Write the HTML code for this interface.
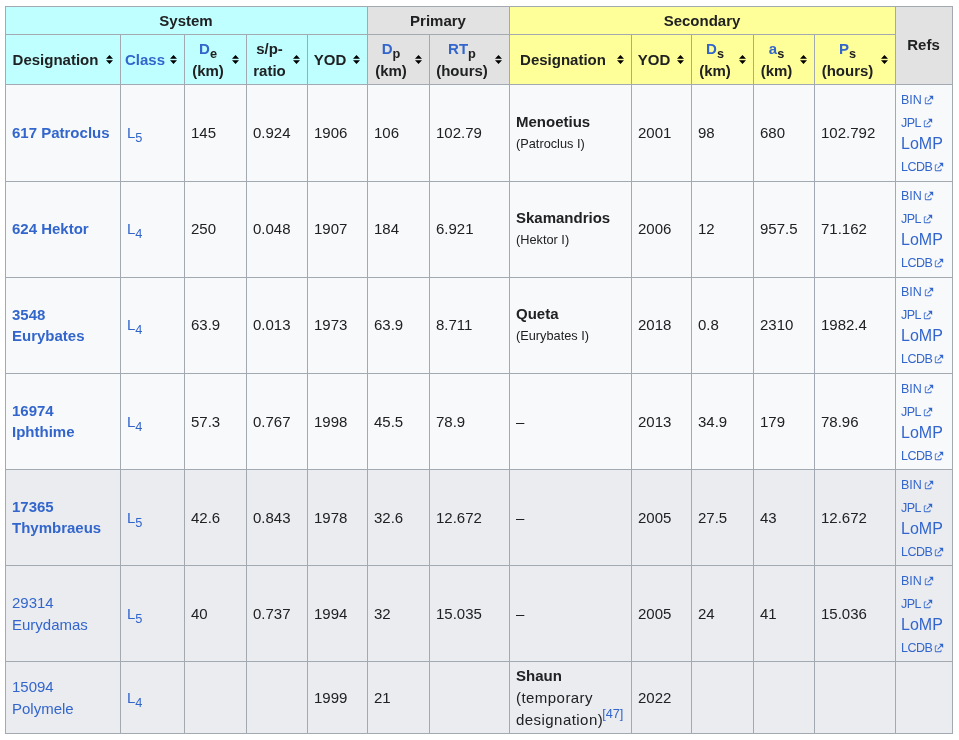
<!DOCTYPE html>
<html><head><meta charset="utf-8"><style>
html,body{margin:0;padding:0;background:#fff;width:959px;height:740px;overflow:hidden}
body{position:relative;font-family:"Liberation Sans",sans-serif;color:#202122;font-size:15px}
.frame{position:absolute;left:5px;top:6px;width:948px;height:728px;background:#a2a9b1}
.c{position:absolute}
.layer{position:absolute;left:0;top:0;width:959px;height:740px;will-change:transform}
.t{position:absolute;line-height:20px;white-space:nowrap;font-size:15px}
.t.sm{font-size:12.75px}
.t.l.sm{font-size:12.5px}
.b,b{font-weight:bold}
.l,.l b{color:#3366cc}
sub{font-size:85%;vertical-align:-4px;line-height:0;font-weight:inherit}
.b sub{color:#202122}
sup{font-size:85%;vertical-align:7px;line-height:0;letter-spacing:0;margin-left:-1px}
.ic{position:absolute;width:7px;height:9px;line-height:0}
.ls{letter-spacing:0.45px}
.ext{margin-left:2px;vertical-align:-1px}
</style></head><body>
<div class="frame"></div>
<div class="layer">
<div class="c" style="left:6px;top:7px;width:361px;height:27px;background:#bfffff"></div>
<div class="c" style="left:368px;top:7px;width:141px;height:27px;background:#e2e2e2"></div>
<div class="c" style="left:510px;top:7px;width:385px;height:27px;background:#ffff99"></div>
<div class="c" style="left:896px;top:7px;width:56px;height:77px;background:#e2e2e2"></div>
<div class="c" style="left:6px;top:35px;width:114px;height:49px;background:#bfffff"></div>
<div class="c" style="left:121px;top:35px;width:63px;height:49px;background:#bfffff"></div>
<div class="c" style="left:185px;top:35px;width:61px;height:49px;background:#bfffff"></div>
<div class="c" style="left:247px;top:35px;width:60px;height:49px;background:#bfffff"></div>
<div class="c" style="left:308px;top:35px;width:59px;height:49px;background:#bfffff"></div>
<div class="c" style="left:368px;top:35px;width:61px;height:49px;background:#e2e2e2"></div>
<div class="c" style="left:430px;top:35px;width:79px;height:49px;background:#e2e2e2"></div>
<div class="c" style="left:510px;top:35px;width:121px;height:49px;background:#ffff99"></div>
<div class="c" style="left:632px;top:35px;width:59px;height:49px;background:#ffff99"></div>
<div class="c" style="left:692px;top:35px;width:61px;height:49px;background:#ffff99"></div>
<div class="c" style="left:754px;top:35px;width:60px;height:49px;background:#ffff99"></div>
<div class="c" style="left:815px;top:35px;width:80px;height:49px;background:#ffff99"></div>
<div class="c" style="left:6px;top:85px;width:114px;height:96px;background:#f8f9fa"></div>
<div class="c" style="left:121px;top:85px;width:63px;height:96px;background:#f8f9fa"></div>
<div class="c" style="left:185px;top:85px;width:61px;height:96px;background:#f8f9fa"></div>
<div class="c" style="left:247px;top:85px;width:60px;height:96px;background:#f8f9fa"></div>
<div class="c" style="left:308px;top:85px;width:59px;height:96px;background:#f8f9fa"></div>
<div class="c" style="left:368px;top:85px;width:61px;height:96px;background:#f8f9fa"></div>
<div class="c" style="left:430px;top:85px;width:79px;height:96px;background:#f8f9fa"></div>
<div class="c" style="left:510px;top:85px;width:121px;height:96px;background:#f8f9fa"></div>
<div class="c" style="left:632px;top:85px;width:59px;height:96px;background:#f8f9fa"></div>
<div class="c" style="left:692px;top:85px;width:61px;height:96px;background:#f8f9fa"></div>
<div class="c" style="left:754px;top:85px;width:60px;height:96px;background:#f8f9fa"></div>
<div class="c" style="left:815px;top:85px;width:80px;height:96px;background:#f8f9fa"></div>
<div class="c" style="left:896px;top:85px;width:56px;height:96px;background:#f8f9fa"></div>
<div class="c" style="left:6px;top:182px;width:114px;height:95px;background:#f8f9fa"></div>
<div class="c" style="left:121px;top:182px;width:63px;height:95px;background:#f8f9fa"></div>
<div class="c" style="left:185px;top:182px;width:61px;height:95px;background:#f8f9fa"></div>
<div class="c" style="left:247px;top:182px;width:60px;height:95px;background:#f8f9fa"></div>
<div class="c" style="left:308px;top:182px;width:59px;height:95px;background:#f8f9fa"></div>
<div class="c" style="left:368px;top:182px;width:61px;height:95px;background:#f8f9fa"></div>
<div class="c" style="left:430px;top:182px;width:79px;height:95px;background:#f8f9fa"></div>
<div class="c" style="left:510px;top:182px;width:121px;height:95px;background:#f8f9fa"></div>
<div class="c" style="left:632px;top:182px;width:59px;height:95px;background:#f8f9fa"></div>
<div class="c" style="left:692px;top:182px;width:61px;height:95px;background:#f8f9fa"></div>
<div class="c" style="left:754px;top:182px;width:60px;height:95px;background:#f8f9fa"></div>
<div class="c" style="left:815px;top:182px;width:80px;height:95px;background:#f8f9fa"></div>
<div class="c" style="left:896px;top:182px;width:56px;height:95px;background:#f8f9fa"></div>
<div class="c" style="left:6px;top:278px;width:114px;height:95px;background:#f8f9fa"></div>
<div class="c" style="left:121px;top:278px;width:63px;height:95px;background:#f8f9fa"></div>
<div class="c" style="left:185px;top:278px;width:61px;height:95px;background:#f8f9fa"></div>
<div class="c" style="left:247px;top:278px;width:60px;height:95px;background:#f8f9fa"></div>
<div class="c" style="left:308px;top:278px;width:59px;height:95px;background:#f8f9fa"></div>
<div class="c" style="left:368px;top:278px;width:61px;height:95px;background:#f8f9fa"></div>
<div class="c" style="left:430px;top:278px;width:79px;height:95px;background:#f8f9fa"></div>
<div class="c" style="left:510px;top:278px;width:121px;height:95px;background:#f8f9fa"></div>
<div class="c" style="left:632px;top:278px;width:59px;height:95px;background:#f8f9fa"></div>
<div class="c" style="left:692px;top:278px;width:61px;height:95px;background:#f8f9fa"></div>
<div class="c" style="left:754px;top:278px;width:60px;height:95px;background:#f8f9fa"></div>
<div class="c" style="left:815px;top:278px;width:80px;height:95px;background:#f8f9fa"></div>
<div class="c" style="left:896px;top:278px;width:56px;height:95px;background:#f8f9fa"></div>
<div class="c" style="left:6px;top:374px;width:114px;height:95px;background:#f8f9fa"></div>
<div class="c" style="left:121px;top:374px;width:63px;height:95px;background:#f8f9fa"></div>
<div class="c" style="left:185px;top:374px;width:61px;height:95px;background:#f8f9fa"></div>
<div class="c" style="left:247px;top:374px;width:60px;height:95px;background:#f8f9fa"></div>
<div class="c" style="left:308px;top:374px;width:59px;height:95px;background:#f8f9fa"></div>
<div class="c" style="left:368px;top:374px;width:61px;height:95px;background:#f8f9fa"></div>
<div class="c" style="left:430px;top:374px;width:79px;height:95px;background:#f8f9fa"></div>
<div class="c" style="left:510px;top:374px;width:121px;height:95px;background:#f8f9fa"></div>
<div class="c" style="left:632px;top:374px;width:59px;height:95px;background:#f8f9fa"></div>
<div class="c" style="left:692px;top:374px;width:61px;height:95px;background:#f8f9fa"></div>
<div class="c" style="left:754px;top:374px;width:60px;height:95px;background:#f8f9fa"></div>
<div class="c" style="left:815px;top:374px;width:80px;height:95px;background:#f8f9fa"></div>
<div class="c" style="left:896px;top:374px;width:56px;height:95px;background:#f8f9fa"></div>
<div class="c" style="left:6px;top:470px;width:114px;height:95px;background:#eaecf0"></div>
<div class="c" style="left:121px;top:470px;width:63px;height:95px;background:#eaecf0"></div>
<div class="c" style="left:185px;top:470px;width:61px;height:95px;background:#eaecf0"></div>
<div class="c" style="left:247px;top:470px;width:60px;height:95px;background:#eaecf0"></div>
<div class="c" style="left:308px;top:470px;width:59px;height:95px;background:#eaecf0"></div>
<div class="c" style="left:368px;top:470px;width:61px;height:95px;background:#eaecf0"></div>
<div class="c" style="left:430px;top:470px;width:79px;height:95px;background:#eaecf0"></div>
<div class="c" style="left:510px;top:470px;width:121px;height:95px;background:#eaecf0"></div>
<div class="c" style="left:632px;top:470px;width:59px;height:95px;background:#eaecf0"></div>
<div class="c" style="left:692px;top:470px;width:61px;height:95px;background:#eaecf0"></div>
<div class="c" style="left:754px;top:470px;width:60px;height:95px;background:#eaecf0"></div>
<div class="c" style="left:815px;top:470px;width:80px;height:95px;background:#eaecf0"></div>
<div class="c" style="left:896px;top:470px;width:56px;height:95px;background:#eaecf0"></div>
<div class="c" style="left:6px;top:566px;width:114px;height:95px;background:#eaecf0"></div>
<div class="c" style="left:121px;top:566px;width:63px;height:95px;background:#eaecf0"></div>
<div class="c" style="left:185px;top:566px;width:61px;height:95px;background:#eaecf0"></div>
<div class="c" style="left:247px;top:566px;width:60px;height:95px;background:#eaecf0"></div>
<div class="c" style="left:308px;top:566px;width:59px;height:95px;background:#eaecf0"></div>
<div class="c" style="left:368px;top:566px;width:61px;height:95px;background:#eaecf0"></div>
<div class="c" style="left:430px;top:566px;width:79px;height:95px;background:#eaecf0"></div>
<div class="c" style="left:510px;top:566px;width:121px;height:95px;background:#eaecf0"></div>
<div class="c" style="left:632px;top:566px;width:59px;height:95px;background:#eaecf0"></div>
<div class="c" style="left:692px;top:566px;width:61px;height:95px;background:#eaecf0"></div>
<div class="c" style="left:754px;top:566px;width:60px;height:95px;background:#eaecf0"></div>
<div class="c" style="left:815px;top:566px;width:80px;height:95px;background:#eaecf0"></div>
<div class="c" style="left:896px;top:566px;width:56px;height:95px;background:#eaecf0"></div>
<div class="c" style="left:6px;top:662px;width:114px;height:71px;background:#eaecf0"></div>
<div class="c" style="left:121px;top:662px;width:63px;height:71px;background:#eaecf0"></div>
<div class="c" style="left:185px;top:662px;width:61px;height:71px;background:#eaecf0"></div>
<div class="c" style="left:247px;top:662px;width:60px;height:71px;background:#eaecf0"></div>
<div class="c" style="left:308px;top:662px;width:59px;height:71px;background:#eaecf0"></div>
<div class="c" style="left:368px;top:662px;width:61px;height:71px;background:#eaecf0"></div>
<div class="c" style="left:430px;top:662px;width:79px;height:71px;background:#eaecf0"></div>
<div class="c" style="left:510px;top:662px;width:121px;height:71px;background:#eaecf0"></div>
<div class="c" style="left:632px;top:662px;width:59px;height:71px;background:#eaecf0"></div>
<div class="c" style="left:692px;top:662px;width:61px;height:71px;background:#eaecf0"></div>
<div class="c" style="left:754px;top:662px;width:60px;height:71px;background:#eaecf0"></div>
<div class="c" style="left:815px;top:662px;width:80px;height:71px;background:#eaecf0"></div>
<div class="c" style="left:896px;top:662px;width:56px;height:71px;background:#eaecf0"></div>
<div class="t b" style="top:10.70px;left:86.00px;width:200px;text-align:center;">System</div>
<div class="t b" style="top:10.70px;left:338.00px;width:200px;text-align:center;">Primary</div>
<div class="t b" style="top:10.70px;left:602.00px;width:200px;text-align:center;">Secondary</div>
<div class="t b" style="top:35.40px;left:823.50px;width:200px;text-align:center;">Refs</div>
<div class="t b" style="top:50.20px;left:-44.50px;width:200px;text-align:center;">Designation</div>
<div class="ic" style="left:106px;top:55px"><svg width="7" height="9" viewBox="0 0 7 9"><path d="M0 3.7L3.5 0 7 3.7z M0 5.2H7L3.5 8.9z" fill="#000"/></svg></div>
<div class="t b" style="top:50.20px;left:45.00px;width:200px;text-align:center;"><span class="l">Class</span></div>
<div class="ic" style="left:170px;top:55px"><svg width="7" height="9" viewBox="0 0 7 9"><path d="M0 3.7L3.5 0 7 3.7z M0 5.2H7L3.5 8.9z" fill="#000"/></svg></div>
<div class="t b" style="top:39.20px;left:108.00px;width:200px;text-align:center;"><span class="l">D</span><sub>e</sub></div>
<div class="t b" style="top:60.90px;left:108.00px;width:200px;text-align:center;">(km)</div>
<div class="ic" style="left:232px;top:55px"><svg width="7" height="9" viewBox="0 0 7 9"><path d="M0 3.7L3.5 0 7 3.7z M0 5.2H7L3.5 8.9z" fill="#000"/></svg></div>
<div class="t b" style="top:39.20px;left:169.50px;width:200px;text-align:center;">s/p-</div>
<div class="t b" style="top:60.90px;left:169.50px;width:200px;text-align:center;">ratio</div>
<div class="ic" style="left:293px;top:55px"><svg width="7" height="9" viewBox="0 0 7 9"><path d="M0 3.7L3.5 0 7 3.7z M0 5.2H7L3.5 8.9z" fill="#000"/></svg></div>
<div class="t b" style="top:50.20px;left:230.00px;width:200px;text-align:center;">YOD</div>
<div class="ic" style="left:353px;top:55px"><svg width="7" height="9" viewBox="0 0 7 9"><path d="M0 3.7L3.5 0 7 3.7z M0 5.2H7L3.5 8.9z" fill="#000"/></svg></div>
<div class="t b" style="top:39.20px;left:291.00px;width:200px;text-align:center;"><span class="l">D</span><sub>p</sub></div>
<div class="t b" style="top:60.90px;left:291.00px;width:200px;text-align:center;">(km)</div>
<div class="ic" style="left:415px;top:55px"><svg width="7" height="9" viewBox="0 0 7 9"><path d="M0 3.7L3.5 0 7 3.7z M0 5.2H7L3.5 8.9z" fill="#000"/></svg></div>
<div class="t b" style="top:39.20px;left:362.00px;width:200px;text-align:center;"><span class="l">RT</span><sub>p</sub></div>
<div class="t b" style="top:60.90px;left:362.00px;width:200px;text-align:center;">(hours)</div>
<div class="ic" style="left:495px;top:55px"><svg width="7" height="9" viewBox="0 0 7 9"><path d="M0 3.7L3.5 0 7 3.7z M0 5.2H7L3.5 8.9z" fill="#000"/></svg></div>
<div class="t b" style="top:50.20px;left:463.00px;width:200px;text-align:center;">Designation</div>
<div class="ic" style="left:617px;top:55px"><svg width="7" height="9" viewBox="0 0 7 9"><path d="M0 3.7L3.5 0 7 3.7z M0 5.2H7L3.5 8.9z" fill="#000"/></svg></div>
<div class="t b" style="top:50.20px;left:554.00px;width:200px;text-align:center;">YOD</div>
<div class="ic" style="left:677px;top:55px"><svg width="7" height="9" viewBox="0 0 7 9"><path d="M0 3.7L3.5 0 7 3.7z M0 5.2H7L3.5 8.9z" fill="#000"/></svg></div>
<div class="t b" style="top:39.20px;left:615.00px;width:200px;text-align:center;"><span class="l">D</span><sub>s</sub></div>
<div class="t b" style="top:60.90px;left:615.00px;width:200px;text-align:center;">(km)</div>
<div class="ic" style="left:739px;top:55px"><svg width="7" height="9" viewBox="0 0 7 9"><path d="M0 3.7L3.5 0 7 3.7z M0 5.2H7L3.5 8.9z" fill="#000"/></svg></div>
<div class="t b" style="top:39.20px;left:676.50px;width:200px;text-align:center;"><span class="l">a</span><sub>s</sub></div>
<div class="t b" style="top:60.90px;left:676.50px;width:200px;text-align:center;">(km)</div>
<div class="ic" style="left:800px;top:55px"><svg width="7" height="9" viewBox="0 0 7 9"><path d="M0 3.7L3.5 0 7 3.7z M0 5.2H7L3.5 8.9z" fill="#000"/></svg></div>
<div class="t b" style="top:39.20px;left:747.50px;width:200px;text-align:center;"><span class="l">P</span><sub>s</sub></div>
<div class="t b" style="top:60.90px;left:747.50px;width:200px;text-align:center;">(hours)</div>
<div class="ic" style="left:881px;top:55px"><svg width="7" height="9" viewBox="0 0 7 9"><path d="M0 3.7L3.5 0 7 3.7z M0 5.2H7L3.5 8.9z" fill="#000"/></svg></div>
<div class="t l" style="top:123.40px;left:12.00px;"><b>617 Patroclus</b></div>
<div class="t l" style="top:123.40px;left:127.00px;">L<sub>5</sub></div>
<div class="t " style="top:123.40px;left:191.00px;">145</div>
<div class="t " style="top:123.40px;left:253.00px;">0.924</div>
<div class="t " style="top:123.40px;left:314.00px;">1906</div>
<div class="t " style="top:123.40px;left:374.00px;">106</div>
<div class="t " style="top:123.40px;left:436.00px;">102.79</div>
<div class="t " style="top:112.40px;left:516.00px;"><b>Menoetius</b></div>
<div class="t sm" style="top:133.88px;left:516.00px;">(Patroclus I)</div>
<div class="t " style="top:123.40px;left:638.00px;">2001</div>
<div class="t " style="top:123.40px;left:698.00px;">98</div>
<div class="t " style="top:123.40px;left:760.00px;">680</div>
<div class="t " style="top:123.40px;left:821.00px;">102.792</div>
<div class="t l sm" style="top:90.00px;left:901.00px;">BIN<svg width="10" height="10" viewBox="0 0 12 12" class="ext"><path fill="#3366cc" d="M6 1h5v5L8.86 3.85 4.7 8 4 7.3l4.15-4.16zM2 3h2v1H2v6h6V8h1v2a1 1 0 0 1-1 1H2a1 1 0 0 1-1-1V4a1 1 0 0 1 1-1"/></svg></div>
<div class="t l sm" style="top:112.90px;left:901.00px;"><span style="letter-spacing:-0.5px">JPL</span><svg width="10" height="10" viewBox="0 0 12 12" class="ext"><path fill="#3366cc" d="M6 1h5v5L8.86 3.85 4.7 8 4 7.3l4.15-4.16zM2 3h2v1H2v6h6V8h1v2a1 1 0 0 1-1 1H2a1 1 0 0 1-1-1V4a1 1 0 0 1 1-1"/></svg></div>
<div class="t l" style="top:134.30px;left:901.00px;"><span style="font-size:16px">LoMP</span></div>
<div class="t l sm" style="top:157.00px;left:901.00px;"><span style="letter-spacing:-0.5px">LCDB</span><svg width="10" height="10" viewBox="0 0 12 12" class="ext"><path fill="#3366cc" d="M6 1h5v5L8.86 3.85 4.7 8 4 7.3l4.15-4.16zM2 3h2v1H2v6h6V8h1v2a1 1 0 0 1-1 1H2a1 1 0 0 1-1-1V4a1 1 0 0 1 1-1"/></svg></div>
<div class="t l" style="top:219.40px;left:12.00px;"><b>624 Hektor</b></div>
<div class="t l" style="top:219.40px;left:127.00px;">L<sub>4</sub></div>
<div class="t " style="top:219.40px;left:191.00px;">250</div>
<div class="t " style="top:219.40px;left:253.00px;">0.048</div>
<div class="t " style="top:219.40px;left:314.00px;">1907</div>
<div class="t " style="top:219.40px;left:374.00px;">184</div>
<div class="t " style="top:219.40px;left:436.00px;">6.921</div>
<div class="t " style="top:208.40px;left:516.00px;"><b>Skamandrios</b></div>
<div class="t sm" style="top:229.88px;left:516.00px;">(Hektor I)</div>
<div class="t " style="top:219.40px;left:638.00px;">2006</div>
<div class="t " style="top:219.40px;left:698.00px;">12</div>
<div class="t " style="top:219.40px;left:760.00px;">957.5</div>
<div class="t " style="top:219.40px;left:821.00px;">71.162</div>
<div class="t l sm" style="top:186.00px;left:901.00px;">BIN<svg width="10" height="10" viewBox="0 0 12 12" class="ext"><path fill="#3366cc" d="M6 1h5v5L8.86 3.85 4.7 8 4 7.3l4.15-4.16zM2 3h2v1H2v6h6V8h1v2a1 1 0 0 1-1 1H2a1 1 0 0 1-1-1V4a1 1 0 0 1 1-1"/></svg></div>
<div class="t l sm" style="top:208.90px;left:901.00px;"><span style="letter-spacing:-0.5px">JPL</span><svg width="10" height="10" viewBox="0 0 12 12" class="ext"><path fill="#3366cc" d="M6 1h5v5L8.86 3.85 4.7 8 4 7.3l4.15-4.16zM2 3h2v1H2v6h6V8h1v2a1 1 0 0 1-1 1H2a1 1 0 0 1-1-1V4a1 1 0 0 1 1-1"/></svg></div>
<div class="t l" style="top:230.30px;left:901.00px;"><span style="font-size:16px">LoMP</span></div>
<div class="t l sm" style="top:253.00px;left:901.00px;"><span style="letter-spacing:-0.5px">LCDB</span><svg width="10" height="10" viewBox="0 0 12 12" class="ext"><path fill="#3366cc" d="M6 1h5v5L8.86 3.85 4.7 8 4 7.3l4.15-4.16zM2 3h2v1H2v6h6V8h1v2a1 1 0 0 1-1 1H2a1 1 0 0 1-1-1V4a1 1 0 0 1 1-1"/></svg></div>
<div class="t l" style="top:305.40px;left:12.00px;"><b>3548</b></div>
<div class="t l" style="top:326.40px;left:12.00px;"><b>Eurybates</b></div>
<div class="t l" style="top:315.40px;left:127.00px;">L<sub>4</sub></div>
<div class="t " style="top:315.40px;left:191.00px;">63.9</div>
<div class="t " style="top:315.40px;left:253.00px;">0.013</div>
<div class="t " style="top:315.40px;left:314.00px;">1973</div>
<div class="t " style="top:315.40px;left:374.00px;">63.9</div>
<div class="t " style="top:315.40px;left:436.00px;">8.711</div>
<div class="t " style="top:304.40px;left:516.00px;"><b>Queta</b></div>
<div class="t sm" style="top:325.88px;left:516.00px;">(Eurybates I)</div>
<div class="t " style="top:315.40px;left:638.00px;">2018</div>
<div class="t " style="top:315.40px;left:698.00px;">0.8</div>
<div class="t " style="top:315.40px;left:760.00px;">2310</div>
<div class="t " style="top:315.40px;left:821.00px;">1982.4</div>
<div class="t l sm" style="top:282.00px;left:901.00px;">BIN<svg width="10" height="10" viewBox="0 0 12 12" class="ext"><path fill="#3366cc" d="M6 1h5v5L8.86 3.85 4.7 8 4 7.3l4.15-4.16zM2 3h2v1H2v6h6V8h1v2a1 1 0 0 1-1 1H2a1 1 0 0 1-1-1V4a1 1 0 0 1 1-1"/></svg></div>
<div class="t l sm" style="top:304.90px;left:901.00px;"><span style="letter-spacing:-0.5px">JPL</span><svg width="10" height="10" viewBox="0 0 12 12" class="ext"><path fill="#3366cc" d="M6 1h5v5L8.86 3.85 4.7 8 4 7.3l4.15-4.16zM2 3h2v1H2v6h6V8h1v2a1 1 0 0 1-1 1H2a1 1 0 0 1-1-1V4a1 1 0 0 1 1-1"/></svg></div>
<div class="t l" style="top:326.30px;left:901.00px;"><span style="font-size:16px">LoMP</span></div>
<div class="t l sm" style="top:349.00px;left:901.00px;"><span style="letter-spacing:-0.5px">LCDB</span><svg width="10" height="10" viewBox="0 0 12 12" class="ext"><path fill="#3366cc" d="M6 1h5v5L8.86 3.85 4.7 8 4 7.3l4.15-4.16zM2 3h2v1H2v6h6V8h1v2a1 1 0 0 1-1 1H2a1 1 0 0 1-1-1V4a1 1 0 0 1 1-1"/></svg></div>
<div class="t l" style="top:401.40px;left:12.00px;"><b>16974</b></div>
<div class="t l" style="top:422.40px;left:12.00px;"><b>Iphthime</b></div>
<div class="t l" style="top:412.40px;left:127.00px;">L<sub>4</sub></div>
<div class="t " style="top:412.40px;left:191.00px;">57.3</div>
<div class="t " style="top:412.40px;left:253.00px;">0.767</div>
<div class="t " style="top:412.40px;left:314.00px;">1998</div>
<div class="t " style="top:412.40px;left:374.00px;">45.5</div>
<div class="t " style="top:412.40px;left:436.00px;">78.9</div>
<div class="t " style="top:412.40px;left:516.00px;">–</div>
<div class="t " style="top:412.40px;left:638.00px;">2013</div>
<div class="t " style="top:412.40px;left:698.00px;">34.9</div>
<div class="t " style="top:412.40px;left:760.00px;">179</div>
<div class="t " style="top:412.40px;left:821.00px;">78.96</div>
<div class="t l sm" style="top:379.00px;left:901.00px;">BIN<svg width="10" height="10" viewBox="0 0 12 12" class="ext"><path fill="#3366cc" d="M6 1h5v5L8.86 3.85 4.7 8 4 7.3l4.15-4.16zM2 3h2v1H2v6h6V8h1v2a1 1 0 0 1-1 1H2a1 1 0 0 1-1-1V4a1 1 0 0 1 1-1"/></svg></div>
<div class="t l sm" style="top:401.90px;left:901.00px;"><span style="letter-spacing:-0.5px">JPL</span><svg width="10" height="10" viewBox="0 0 12 12" class="ext"><path fill="#3366cc" d="M6 1h5v5L8.86 3.85 4.7 8 4 7.3l4.15-4.16zM2 3h2v1H2v6h6V8h1v2a1 1 0 0 1-1 1H2a1 1 0 0 1-1-1V4a1 1 0 0 1 1-1"/></svg></div>
<div class="t l" style="top:423.30px;left:901.00px;"><span style="font-size:16px">LoMP</span></div>
<div class="t l sm" style="top:446.00px;left:901.00px;"><span style="letter-spacing:-0.5px">LCDB</span><svg width="10" height="10" viewBox="0 0 12 12" class="ext"><path fill="#3366cc" d="M6 1h5v5L8.86 3.85 4.7 8 4 7.3l4.15-4.16zM2 3h2v1H2v6h6V8h1v2a1 1 0 0 1-1 1H2a1 1 0 0 1-1-1V4a1 1 0 0 1 1-1"/></svg></div>
<div class="t l" style="top:497.40px;left:12.00px;"><b>17365</b></div>
<div class="t l" style="top:518.40px;left:12.00px;"><b>Thymbraeus</b></div>
<div class="t l" style="top:508.40px;left:127.00px;">L<sub>5</sub></div>
<div class="t " style="top:508.40px;left:191.00px;">42.6</div>
<div class="t " style="top:508.40px;left:253.00px;">0.843</div>
<div class="t " style="top:508.40px;left:314.00px;">1978</div>
<div class="t " style="top:508.40px;left:374.00px;">32.6</div>
<div class="t " style="top:508.40px;left:436.00px;">12.672</div>
<div class="t " style="top:508.40px;left:516.00px;">–</div>
<div class="t " style="top:508.40px;left:638.00px;">2005</div>
<div class="t " style="top:508.40px;left:698.00px;">27.5</div>
<div class="t " style="top:508.40px;left:760.00px;">43</div>
<div class="t " style="top:508.40px;left:821.00px;">12.672</div>
<div class="t l sm" style="top:475.00px;left:901.00px;">BIN<svg width="10" height="10" viewBox="0 0 12 12" class="ext"><path fill="#3366cc" d="M6 1h5v5L8.86 3.85 4.7 8 4 7.3l4.15-4.16zM2 3h2v1H2v6h6V8h1v2a1 1 0 0 1-1 1H2a1 1 0 0 1-1-1V4a1 1 0 0 1 1-1"/></svg></div>
<div class="t l sm" style="top:497.90px;left:901.00px;"><span style="letter-spacing:-0.5px">JPL</span><svg width="10" height="10" viewBox="0 0 12 12" class="ext"><path fill="#3366cc" d="M6 1h5v5L8.86 3.85 4.7 8 4 7.3l4.15-4.16zM2 3h2v1H2v6h6V8h1v2a1 1 0 0 1-1 1H2a1 1 0 0 1-1-1V4a1 1 0 0 1 1-1"/></svg></div>
<div class="t l" style="top:519.30px;left:901.00px;"><span style="font-size:16px">LoMP</span></div>
<div class="t l sm" style="top:542.00px;left:901.00px;"><span style="letter-spacing:-0.5px">LCDB</span><svg width="10" height="10" viewBox="0 0 12 12" class="ext"><path fill="#3366cc" d="M6 1h5v5L8.86 3.85 4.7 8 4 7.3l4.15-4.16zM2 3h2v1H2v6h6V8h1v2a1 1 0 0 1-1 1H2a1 1 0 0 1-1-1V4a1 1 0 0 1 1-1"/></svg></div>
<div class="t l" style="top:593.40px;left:12.00px;">29314</div>
<div class="t l" style="top:615.40px;left:12.00px;">Eurydamas</div>
<div class="t l" style="top:604.40px;left:127.00px;">L<sub>5</sub></div>
<div class="t " style="top:604.40px;left:191.00px;">40</div>
<div class="t " style="top:604.40px;left:253.00px;">0.737</div>
<div class="t " style="top:604.40px;left:314.00px;">1994</div>
<div class="t " style="top:604.40px;left:374.00px;">32</div>
<div class="t " style="top:604.40px;left:436.00px;">15.035</div>
<div class="t " style="top:604.40px;left:516.00px;">–</div>
<div class="t " style="top:604.40px;left:638.00px;">2005</div>
<div class="t " style="top:604.40px;left:698.00px;">24</div>
<div class="t " style="top:604.40px;left:760.00px;">41</div>
<div class="t " style="top:604.40px;left:821.00px;">15.036</div>
<div class="t l sm" style="top:571.00px;left:901.00px;">BIN<svg width="10" height="10" viewBox="0 0 12 12" class="ext"><path fill="#3366cc" d="M6 1h5v5L8.86 3.85 4.7 8 4 7.3l4.15-4.16zM2 3h2v1H2v6h6V8h1v2a1 1 0 0 1-1 1H2a1 1 0 0 1-1-1V4a1 1 0 0 1 1-1"/></svg></div>
<div class="t l sm" style="top:593.90px;left:901.00px;"><span style="letter-spacing:-0.5px">JPL</span><svg width="10" height="10" viewBox="0 0 12 12" class="ext"><path fill="#3366cc" d="M6 1h5v5L8.86 3.85 4.7 8 4 7.3l4.15-4.16zM2 3h2v1H2v6h6V8h1v2a1 1 0 0 1-1 1H2a1 1 0 0 1-1-1V4a1 1 0 0 1 1-1"/></svg></div>
<div class="t l" style="top:615.30px;left:901.00px;"><span style="font-size:16px">LoMP</span></div>
<div class="t l sm" style="top:638.00px;left:901.00px;"><span style="letter-spacing:-0.5px">LCDB</span><svg width="10" height="10" viewBox="0 0 12 12" class="ext"><path fill="#3366cc" d="M6 1h5v5L8.86 3.85 4.7 8 4 7.3l4.15-4.16zM2 3h2v1H2v6h6V8h1v2a1 1 0 0 1-1 1H2a1 1 0 0 1-1-1V4a1 1 0 0 1 1-1"/></svg></div>
<div class="t l" style="top:677.40px;left:12.00px;">15094</div>
<div class="t l" style="top:699.40px;left:12.00px;">Polymele</div>
<div class="t l" style="top:688.40px;left:127.00px;">L<sub>4</sub></div>
<div class="t " style="top:688.40px;left:314.00px;">1999</div>
<div class="t " style="top:688.40px;left:374.00px;">21</div>
<div class="t " style="top:666.40px;left:516.00px;"><b>Shaun</b></div>
<div class="t ls" style="top:688.40px;left:516.00px;">(temporary</div>
<div class="t ls" style="top:709.70px;left:516.00px;">designation)<sup class="l">[47]</sup></div>
<div class="t " style="top:688.40px;left:638.00px;">2022</div>
</div>
</body></html>
